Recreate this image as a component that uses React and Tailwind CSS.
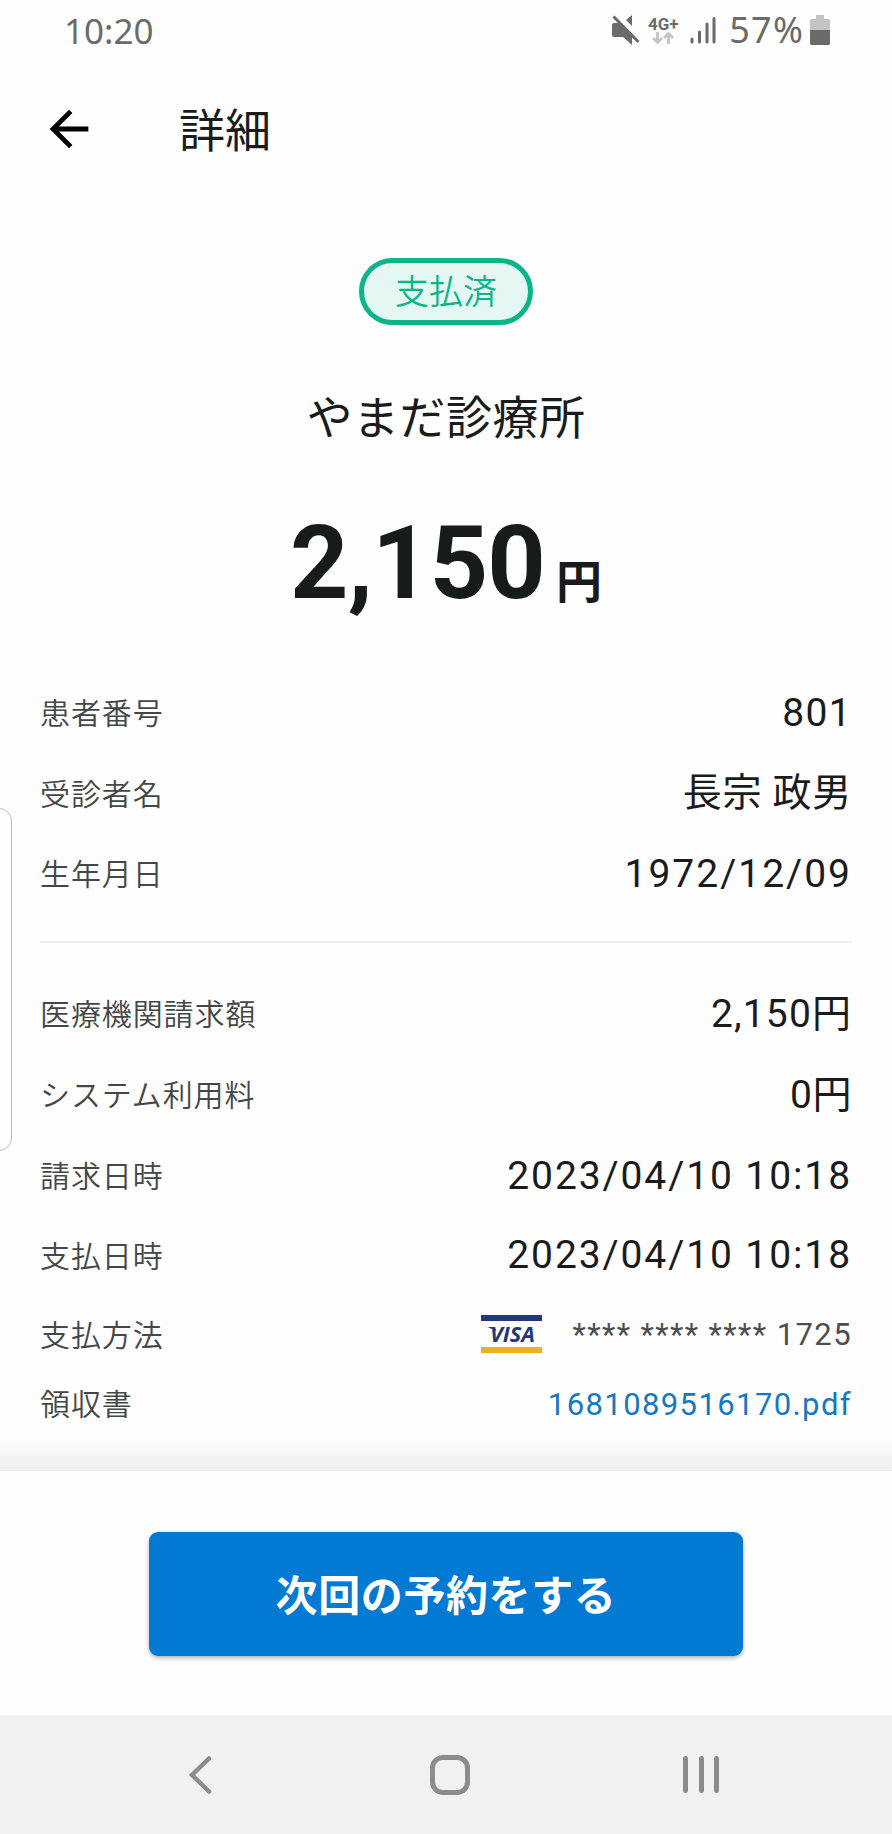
import React from 'react';

const patientRows = [
  { label: '患者番号', value: '801', tracking: 'tracking-[1.3px]' },
  { label: '受診者名', value: '長宗 政男', tracking: 'tracking-[0.7px]' },
  { label: '生年月日', value: '1972/12/09', tracking: 'tracking-[2px]' },
];

const billingRows = [
  { label: '医療機関請求額', value: '2,150円', tracking: 'tracking-[1.1px]', height: 'h-[81px]' },
  { label: 'システム利用料', value: '0円', tracking: 'tracking-[0.6px]', height: 'h-[81px]' },
  { label: '請求日時', value: '2023/04/10 10:18', tracking: 'tracking-[1.9px]', height: 'h-[81px]' },
  { label: '支払日時', value: '2023/04/10 10:18', tracking: 'tracking-[1.9px]', height: 'h-[78px]' },
];

const Row = ({ label, height = 'h-[80.5px]', children }) => (
  <div className={`flex items-center justify-between ${height}`}>
    <div className="pb-[4px] font-['Noto_Sans_CJK_JP'] text-[30px] leading-none font-[350] tracking-[0.9px] text-[#434747]">{label}</div>
    {children}
  </div>
);

const Value = ({ tracking, children }) => (
  <div className={`text-[39px] leading-none whitespace-pre text-[#1a1c1c] ${tracking}`}>{children}</div>
);

const StatusBar = () => (
  <div className="flex h-[60px] items-center justify-between pl-[64px] pr-[62px] font-['Noto_Sans'] text-[35px] leading-none text-[#6b6b6b]">
    <div>10:20</div>
    <div className="flex items-center">
      <svg className="mr-[7px] h-[32px] w-[30px]" viewBox="0 0 30 32" fill="#6b6b6b">
        <path d="M1 11a2 2 0 0 1 2-2h6l12 12v10l-9-8H3a2 2 0 0 1-2-2z" />
        <path d="M21 1v11l-6-6z" />
        <path d="M2.500 2.500L27.500 28" stroke="#6b6b6b" strokeWidth="3" />
      </svg>
      <div className="mr-[12px] flex w-[30px] flex-col items-center">
        <span className="font-['Roboto'] text-[17px] leading-[16px] font-bold">4G+</span>
        <svg className="h-[12px] w-[22px]" viewBox="0 0 22 12" fill="none" stroke="#c4c4c4" strokeWidth="2.800">
          <path d="M5.500 0v10M1 6l4.500 4.500L10 6M16.500 12V2M12 6l4.500-4.500L21 6" />
        </svg>
      </div>
      <svg className="mr-[13px] h-[28px] w-[26px]" viewBox="0 0 26 28" stroke="#6b6b6b" strokeWidth="3" strokeLinecap="round">
        <path d="M2 23v3M9.500 16v10M17 8v18M24 2.500v23.500" />
      </svg>
      <span className="mr-[6px] text-[36px] tracking-[1.2px]">57%</span>
      <svg className="h-[30px] w-[20px]" viewBox="0 0 20 30">
        <path d="M6 0h8v4h4.500A1.500 1.500 0 0 1 20 5.500V15H0V5.500A1.500 1.500 0 0 1 1.500 4H6z" fill="#c4c4c4" />
        <path d="M0 15h20v13.500a1.500 1.500 0 0 1-1.500 1.500h-17A1.500 1.500 0 0 1 0 28.500z" fill="#6b6b6b" />
      </svg>
    </div>
  </div>
);

const VisaLogo = () => (
  <svg className="mb-[2px] h-[38px] w-[61px]" viewBox="0 0 61 38">
    <rect width="61" height="6" fill="#23387a" />
    <rect y="32" width="61" height="6" fill="#edb01f" />
    <path d="M6.500 12h7l2 4z" fill="#23387a" />
    <text x="9" y="27" textLength="45" lengthAdjust="spacingAndGlyphs" fill="#23387a" className="font-['Open_Sans'] text-[21px] font-bold italic">
      VISA
    </text>
  </svg>
);

const NavBar = () => (
  <div className="flex h-[119px] items-center justify-between bg-[#f1f1f1] pr-[173px] pl-[188px]">
    <svg className="h-[40px] w-[24px]" viewBox="0 0 24 40" fill="none" stroke="#8c8c8c" strokeWidth="4.500" strokeLinecap="round">
      <path d="M21 3.500L4 20L21 36.500" />
    </svg>
    <div className="ml-[5px] h-[40px] w-[40px] rounded-[13px] border-[5px] border-[#8c8c8c]" />
    <div className="flex w-[36px] justify-between">
      <div className="h-[37px] w-[5px] rounded-full bg-[#8c8c8c]" />
      <div className="h-[37px] w-[5px] rounded-full bg-[#8c8c8c]" />
      <div className="h-[37px] w-[5px] rounded-full bg-[#8c8c8c]" />
    </div>
  </div>
);

export default function App() {
  return (
    <div className="relative flex h-[1834px] w-[892px] flex-col overflow-hidden bg-[#fefefe] font-['Roboto','Noto_Sans_CJK_JP',sans-serif]">
      <StatusBar />

      <header className="flex h-[138px] items-center pl-[40px]">
        <svg className="h-[58px] w-[58px]" viewBox="0 0 24 24" fill="#000">
          <path d="M20 11H7.830l5.590-5.590L12 4l-8 8 8 8 1.410-1.410L7.830 13H20v-2z" />
        </svg>
        <h1 className="ml-[81px] pt-[3px] text-[46px] leading-none text-[#1a1c1c]">詳細</h1>
      </header>

      <section className="flex flex-col items-center pt-[60px]">
        <div className="flex h-[67px] w-[174px] items-center justify-center rounded-full border-[5px] border-[#0bb58b] bg-[#e5f7f3] pb-[4px] font-['Noto_Sans_CJK_JP'] text-[34px] leading-none font-[350] text-[#0bb58b]">
          支払済
        </div>
        <h2 className="mt-[63px] text-[46px] leading-[60px] tracking-[0.5px] text-[#1a1c1c]">やまだ診療所</h2>
        <div className="mt-[55px] flex h-[120px] items-baseline font-bold text-[#171b1b]">
          <span className="text-[102px] leading-[120px] tracking-[-0.8px]">2,150</span>
          <span className="ml-[11px] text-[46px] leading-none">円</span>
        </div>
      </section>

      <section className="mt-[50px] px-[40px]">
        {patientRows.map((row) => (
          <Row key={row.label} label={row.label}>
            <Value tracking={row.tracking}>{row.value}</Value>
          </Row>
        ))}
        <hr className="mt-[26px] mb-[31px] border-t-2 border-[#efefef]" />
        {billingRows.map((row) => (
          <Row key={row.label} label={row.label} height={row.height}>
            <Value tracking={row.tracking}>{row.value}</Value>
          </Row>
        ))}
        <Row label="支払方法" height="h-[80px]">
          <div className="flex items-center">
            <VisaLogo />
            <span className="ml-[30px] text-[31px] leading-none tracking-[1.4px] text-[#4c4f4f]">**** **** **** 1725</span>
          </div>
        </Row>
        <Row label="領収書" height="h-[59px]">
          <a href="#" className="text-[31px] leading-none tracking-[1.4px] text-[#1478c4]">
            1681089516170.pdf
          </a>
        </Row>
      </section>

      <div className="mt-auto h-[32px] bg-linear-to-b from-[#fefefe] to-[#ededed]" />
      <footer className="h-[244px] shrink-0 bg-[#fefefe] pt-[60.5px]">
        <button className="mx-auto flex h-[124px] w-[594px] items-center justify-center rounded-[9px] bg-[#0279d3] pt-[7px] text-[42px] leading-none font-bold tracking-[0.6px] text-white shadow-[0_2px_4px_rgba(0,0,0,0.3)]">
          次回の予約をする
        </button>
      </footer>
      <NavBar />

      {/* edge panel handle */}
      <div className="absolute top-[808px] left-[-20px] h-[343px] w-[32px] rounded-[13px] border-[1.5px] border-[#bdbdbd]" />
    </div>
  );
}
